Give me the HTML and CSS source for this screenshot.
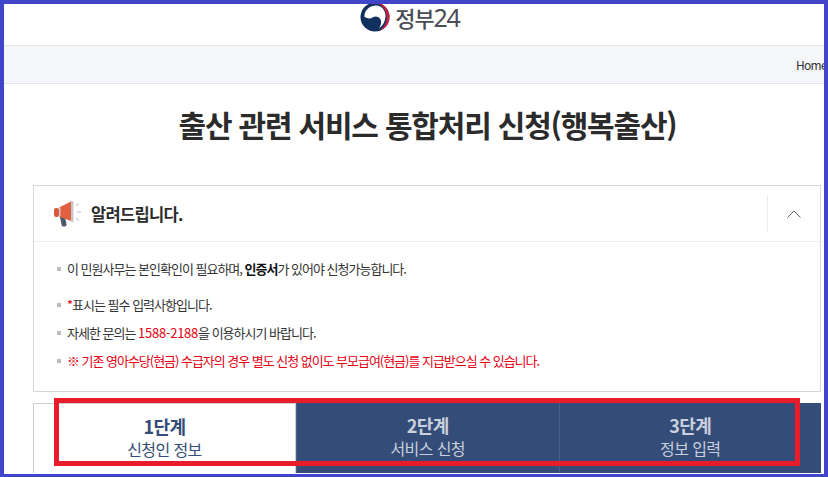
FILE: index.html
```html
<!DOCTYPE html>
<html lang="ko">
<head>
    <meta charset="UTF-8">
    <title>출산 관련 서비스 통합처리 신청</title>
    <link rel="stylesheet" href="styles.css">
</head>
<body>
<div id="page">
    <div class="top">
        <div class="logo">
            <svg class="taegeuk" width="30" height="30" viewBox="0 0 30 30">
                <circle cx="15" cy="15" r="14.500" fill="#12305f"/>
                <path d="M4.500 15C4 8 10 3.500 16 3.500C22 3.500 26 9 25.500 15C25 20 22.500 24 19 26.500C22 22 22 17 18 15C14 13 12 17 9 16.500C7 16 5.500 15.500 4.500 15Z" fill="#fff"/>
                <path d="M15 0.500A14.500 14.500 0 0 1 19.500 28.800C24.500 25 27 20 26.500 14C26 7 21 2 15 0.500Z" fill="#c8203f"/>
            </svg>
            <span class="logo-txt">정부<em>24</em></span>
        </div>
    </div>
    <div class="crumb"><span>Home</span></div>
    <h1 class="title">출산 관련 서비스 통합처리 신청(행복출산)</h1>
    <div class="notice">
        <div class="notice-head">
            <svg class="horn" width="30" height="28" viewBox="0 0 30 28">
                <path d="M7 17h5l1.500 7a2 2 0 0 1-2 2.500h-1a2 2 0 0 1-2-2z" fill="#4c5a68"/>
                <rect x="1" y="8" width="5" height="9" rx="2" fill="#d9573a"/>
                <path d="M6 7.500 L18 1.500 V21 L6 16.500Z" fill="#e2603f"/>
                <rect x="6" y="7.500" width="1.500" height="9" fill="#c9cdd2"/>
                <rect x="18" y="1" width="2.500" height="21" rx="1" fill="#c4c8cd"/>
                <path d="M23 6l3-2.500M24 12h4M23 18l3 2.500" stroke="#b5bcc4" stroke-width="1" fill="none"/>
            </svg>
            <strong class="notice-tit">알려드립니다.</strong>
            <span class="toggle">
                <svg width="14" height="8" viewBox="0 0 14 8"><path d="M0.500 7.500 7 1l6.500 6.500" stroke="#666" stroke-width="1" fill="none"/></svg>
            </span>
        </div>
        <ul class="notice-list">
            <li class="gap">이 민원사무는 본인확인이 필요하며, <b>인증서</b>가 있어야 신청가능합니다.</li>
            <li><i>*</i>표시는 필수 입력사항입니다.</li>
            <li>자세한 문의는 <i class="tel">1588-2188</i>을 이용하시기 바랍니다.</li>
            <li class="red">※ 기존 영아수당(현금) 수급자의 경우 별도 신청 없이도 부모급여(현금)를 지급받으실 수 있습니다.</li>
        </ul>
    </div>
    <ol class="steps">
        <li class="active"><b>1단계</b><span>신청인 정보</span></li>
        <li><b>2단계</b><span>서비스 신청</span></li>
        <li><b>3단계</b><span>정보 입력</span></li>
    </ol>
</div>
<div class="mark"></div>
<div class="frame"></div>
</body>
</html>
```

FILE: styles.css
```css
*{
    margin: 0;
    padding: 0;
    list-style: none;
    box-sizing: border-box;
}
html,body{
    width: 828px;
    height: 477px;
    overflow: hidden;
    background: #fff;
}
body{
    font-family: "Noto Sans CJK KR", "Noto Sans", sans-serif;
    color: #222;
    position: relative;
}
#page{
    width: 828px;
    height: 477px;
    overflow: hidden;
}
.top{
    height: 46px;
    border-bottom: 1px solid #e2e3e6;
    display: flex;
    justify-content: center;
    padding: 2px 0 0 0;
}
.logo{
    display: flex;
    align-items: flex-start;
    gap: 5px;
    height: 30px;
    margin-right: 8px;
}
.taegeuk{
    flex: none;
}
.logo-txt{
    font-size: 22px;
    line-height: 30px;
    color: #4a4d55;
    letter-spacing: -1.2px;
    font-weight: 500;
}
.logo-txt em{
    font-style: normal;
    font-family: "Noto Sans", sans-serif;
    font-weight: 400;
    font-size: 25px;
}
.crumb{
    height: 38px;
    background: #f5f6fa;
    border-bottom: 1px solid #e4e5e8;
    display: flex;
    align-items: center;
    padding-left: 796px;
    font-size: 12px;
    letter-spacing: -0.7px;
    white-space: nowrap;
    color: #333;
}
.title{
    margin: 15px 0 0 0;
    height: 50px;
    line-height: 50px;
    text-align: center;
    font-size: 30px;
    font-weight: 700;
    letter-spacing: -1.2px;
    color: #2b2b2b;
    padding-left: 27px;
}
.notice{
    margin: 36px 0 0 33px;
    width: 788px;
    height: 207px;
    border: 1px solid #d6d6d6;
}
.notice-head{
    height: 56px;
    border-bottom: 1px solid #ececec;
    display: flex;
    align-items: center;
    padding-left: 19px;
}
.horn{
    flex: none;
    margin-right: 8px;
}
.notice-tit{
    font-size: 16.500px;
    font-weight: 700;
    letter-spacing: -0.7px;
    color: #2b2b2b;
}
.toggle{
    margin-left: auto;
    width: 53px;
    height: 37px;
    border-left: 1px solid #ececec;
    display: flex;
    align-items: center;
    justify-content: center;
}
.notice-list{
    padding: 13px 0 0 33px;
    font-size: 13px;
    letter-spacing: -1px;
    color: #333;
}
.notice-list li{
    height: 28px;
    line-height: 28px;
    position: relative;
    white-space: nowrap;
}
.notice-list li:before{
    content: "";
    position: absolute;
    left: -10px;
    top: 12px;
    width: 4px;
    height: 4px;
    background: #bbb;
}
.notice-list li.gap{
    margin-bottom: 8px;
}
.notice-list b{
    color: #111;
}
.notice-list i{
    font-style: normal;
    color: #e60012;
}
.notice-list .tel{
    letter-spacing: -0.25px;
}
.notice-list .red{
    color: #e60012;
    letter-spacing: -1.03px;
}
.steps{
    margin: 11px 0 0 33px;
    width: 788px;
    display: flex;
    height: 70px;
}
.steps li{
    flex: 1;
    background: #344c78;
    color: #c9d0de;
    border-left: 1px solid #4a6088;
    display: flex;
    flex-direction: column;
    align-items: center;
    padding-top: 9px;
}
.steps li.active{
    flex: none;
    width: 263px;
    background: #fff;
    color: #344c78;
    border: 1px solid #ccd0d6;
    border-bottom: 0;
}
.steps b{
    font-size: 18px;
    line-height: 26px;
    letter-spacing: -0.5px;
}
.steps span{
    font-size: 16px;
    line-height: 20px;
    letter-spacing: -0.6px;
}
/* annotation drawn over the capture */
.mark{
    position: absolute;
    left: 54px;
    top: 398px;
    width: 746px;
    height: 68px;
    border: 5px solid #e81c2a;
}
.frame{
    position: absolute;
    left: 0;
    top: 0;
    width: 828px;
    height: 477px;
    border: solid #4045c9;
    border-width: 4px 4px 3px 4px;
}
```
